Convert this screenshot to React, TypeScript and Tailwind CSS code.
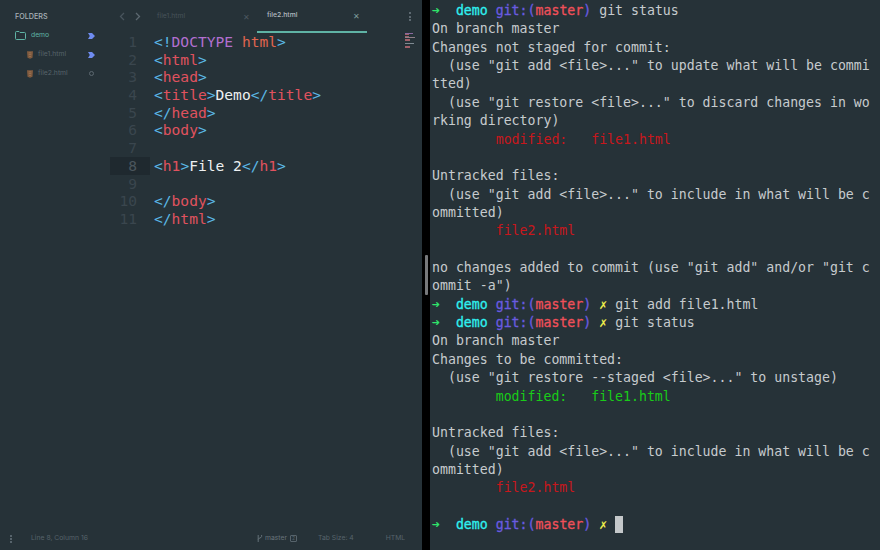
const mono = 'font-["DejaVu_Sans_Mono",monospace]';

function Badge() {
  return (
    <svg width="7" height="8" viewBox="0 0 7 8" className="shrink-0">
      <path d="M0 1H4L7 4L4 7H0L1.8 4Z" fill="#6f8cf0" />
    </svg>
  );
}

function Circle() {
  return <span className="block w-[5px] h-[5px] rounded-full border border-[#5c6870] mx-[1px] shrink-0" />;
}

function HtmlIcon() {
  return (
    <svg width="6" height="8" viewBox="0 0 7 9" className="shrink-0">
      <path d="M0 0H7L6.4 7.8L3.5 9L0.6 7.8Z" fill="#7f5a3e" />
      <path d="M2 2H5M2 4H5M2.4 6L3.5 6.6L4.6 6" stroke="#a87e5e" strokeWidth="0.7" fill="none" />
    </svg>
  );
}

function FileRow({ name, status }: { name: string; status: React.ReactNode }) {
  return (
    <div className="h-[19px] flex items-center pl-[27px] pr-[15px]">
      <HtmlIcon />
      <span className="ml-[5px] text-[6.8px] text-[#56636b] flex-1">{name}</span>
      {status}
    </div>
  );
}

function Sidebar() {
  return (
    <div className="w-[110px] shrink-0 pt-[12px]">
      <div className="pl-[15px] h-[10px] flex items-center text-[7.2px] font-medium text-[#a9b2b8]">FOLDERS</div>
      <div className="h-[19px] mt-[4px] flex items-center pl-[15px] pr-[15px]">
        <svg width="11" height="9" viewBox="0 0 11 9" fill="none" stroke="#5fb3a5" strokeWidth="1" className="shrink-0">
          <path d="M0.5 1.5a1 1 0 0 1 1-1h2.5l1 1h4.5a1 1 0 0 1 1 1v5a1 1 0 0 1-1 1h-8a1 1 0 0 1-1-1z" />
        </svg>
        <span className="ml-[5px] text-[6.8px] text-[#5fb3a5] flex-1">demo</span>
        <Badge />
      </div>
      <FileRow name="file1.html" status={<Badge />} />
      <FileRow name="file2.html" status={<Circle />} />
    </div>
  );
}

function Tabs() {
  return (
    <div className="h-[33px] flex items-start">
      <div className="w-[47px] h-[33px] flex items-center pl-[9px] gap-[10px]">
        <svg width="6" height="9" viewBox="0 0 6 9" fill="none" stroke="#48545c" strokeWidth="1.3"><path d="M5 1L1.5 4.5L5 8" /></svg>
        <svg width="6" height="9" viewBox="0 0 6 9" fill="none" stroke="#5c6870" strokeWidth="1.3"><path d="M1 1L4.5 4.5L1 8" /></svg>
      </div>
      <div className="w-[100px] h-[33px] flex items-center justify-between pr-[7px]">
        <span className="text-[6.8px] text-[#46525a]">file1.html</span>
        <span className="text-[8px] leading-none text-[#4c5860]">✕</span>
      </div>
      <div className="w-[110px] h-[33px] flex items-center justify-between pl-[10px] pr-[7px] border-b-2 border-[#5fb3a5]">
        <span className="text-[6.8px] font-medium text-[#b4bcc1]">file2.html</span>
        <span className="text-[8px] leading-none text-[#7f9c9c]">✕</span>
      </div>
      <div className="flex-1 flex justify-end pr-[11px] pt-[12px]">
        <div className="flex flex-col gap-[1.5px]">
          <span className="block w-[2px] h-[2px] bg-[#5c6870]" />
          <span className="block w-[2px] h-[2px] bg-[#5c6870]" />
          <span className="block w-[2px] h-[2px] bg-[#5c6870]" />
        </div>
      </div>
    </div>
  );
}

const P = ({ c }: { c: string }) => <span className="text-[#5bb8e6]">{c}</span>;
const R = ({ c }: { c: string }) => <span className="text-[#e0525f]">{c}</span>;
const W = ({ c }: { c: string }) => <span className="text-[#eef0f1]">{c}</span>;

function tag(name: string, close = false) {
  return (
    <>
      <P c={close ? '</' : '<'} />
      <R c={name} />
      <P c=">" />
    </>
  );
}

const code: React.ReactNode[] = [
  <>
    <P c="<!" />
    <span className="text-[#b26fd0]">DOCTYPE</span> <span className="text-[#e0654f]">html</span>
    <P c=">" />
  </>,
  tag('html'),
  tag('head'),
  <>
    {tag('title')}
    <W c="Demo" />
    {tag('title', true)}
  </>,
  tag('head', true),
  tag('body'),
  '',
  <>
    {tag('h1')}
    <W c="File 2" />
    {tag('h1', true)}
  </>,
  '',
  tag('body', true),
  tag('html', true),
];

function Editor() {
  return (
    <div className="flex-1 min-w-0 flex flex-col">
      <Tabs />
      <div className={`relative flex-1 text-[14.6px] leading-[17.7px] whitespace-pre ${mono}`}>
        {code.map((line, i) => (
          <div key={i} className="flex h-[17.7px]">
            <div
              className={`w-[40px] pr-[13px] text-right ${i === 7 ? 'bg-[#1f292f] text-[#4b565d]' : 'text-[#3a464e]'}`}
            >
              {i + 1}
            </div>
            <div className="pl-[4px]">{line}</div>
          </div>
        ))}
        {/* Minimap */}
        <div className="absolute right-[7px] top-0 w-[10px] flex flex-col gap-[0.4px]">
          <span className="block h-[1px] w-[8px] bg-[#8a6aa0]" />
          <span className="block h-[1px] w-[4px] bg-[#a0606a]" />
          <span className="block h-[1px] w-[4px] bg-[#a0606a]" />
          <span className="block h-[1px] w-[10px] bg-[#8f7f88]" />
          <span className="block h-[1px] w-[5px] bg-[#a0606a]" />
          <span className="block h-[1px] w-[5px] bg-[#a0606a]" />
          <span className="block h-[1px] w-[1px]" />
          <span className="block h-[1px] w-[9px] bg-[#7f8a92]" />
          <span className="block h-[1px] w-[1px]" />
          <span className="block h-[1px] w-[5px] bg-[#a0606a]" />
          <span className="block h-[1px] w-[5px] bg-[#a0606a]" />
        </div>
      </div>
    </div>
  );
}

function StatusBar() {
  return (
    <div className="h-[24px] shrink-0 pt-[1px] flex items-center text-[6.8px] text-[#56636b]">
      <div className="w-[31px] pl-[10px] flex flex-col gap-[1px]">
        <span className="block w-[2px] h-[2px] bg-[#56636b]" />
        <span className="block w-[2px] h-[2px] bg-[#56636b]" />
        <span className="block w-[2px] h-[2px] bg-[#56636b]" />
      </div>
      <span className="w-[226px]">Line 8, Column 16</span>
      <svg width="6" height="9" viewBox="0 0 6 9" fill="none" stroke="#6a767e" strokeWidth="0.9" className="shrink-0">
        <path d="M1.2 1V8M4.6 1V2.5C4.6 4 1.2 4 1.2 5.5" />
      </svg>
      <span className="ml-[2px] text-[#66727a]">master</span>
      <span className="ml-[3px] w-[7px] h-[7px] border border-[#56636b] rounded-[1px] text-[5px] leading-[5px] text-center">2</span>
      <span className="ml-[21px]">Tab Size: 4</span>
      <span className="ml-[32px]">HTML</span>
    </div>
  );
}

function Prompt({ dirty, cmd }: { dirty?: boolean; cmd?: string }) {
  return (
    <>
      <span className="text-[#2fe36b] font-bold">➜</span>
      {'  '}
      <span className="text-[#2ff0f0] [-webkit-text-stroke:0.3px]">demo</span>{' '}
      <span className="text-[#6a5be0] [-webkit-text-stroke:0.3px]">git:(</span>
      <span className="text-[#f0505a] [-webkit-text-stroke:0.3px]">master</span>
      <span className="text-[#6a5be0] [-webkit-text-stroke:0.3px]">)</span>
      {dirty && (
        <>
          {' '}
          <span className="text-[#eeee4a] font-bold">✗</span>
        </>
      )}
      {cmd && ` ${cmd}`}
    </>
  );
}

const RED = 'text-[#c8171c]';
const GREEN = 'text-[#19cc19]';

const termLines: React.ReactNode[] = [
  <Prompt cmd="git status" />,
  'On branch master',
  'Changes not staged for commit:',
  '  (use "git add <file>..." to update what will be commi',
  'tted)',
  '  (use "git restore <file>..." to discard changes in wo',
  'rking directory)',
  <span className={RED}>{'        modified:   file1.html'}</span>,
  '',
  'Untracked files:',
  '  (use "git add <file>..." to include in what will be c',
  'ommitted)',
  <span className={RED}>{'        file2.html'}</span>,
  '',
  'no changes added to commit (use "git add" and/or "git c',
  'ommit -a")',
  <Prompt dirty cmd="git add file1.html" />,
  <Prompt dirty cmd="git status" />,
  'On branch master',
  'Changes to be committed:',
  '  (use "git restore --staged <file>..." to unstage)',
  <span className={GREEN}>{'        modified:   file1.html'}</span>,
  '',
  'Untracked files:',
  '  (use "git add <file>..." to include in what will be c',
  'ommitted)',
  <span className={RED}>{'        file2.html'}</span>,
  '',
  <>
    <Prompt dirty />{' '}
    <span className="inline-block w-[8px] h-[17px] bg-[#c4c8ca] align-top" />
  </>,
];

function Terminal() {
  return (
    <div className="relative flex-1 min-w-0 bg-[#263238] pl-[2px] pt-[2px] border-l-[8px] border-black">
      {/* Scrollbar thumb */}
      <div className="absolute left-[-5px] top-[255px] w-[3px] h-[40px] rounded-[1px] bg-[#77797b]" />
      <div className={`text-[13.22px] leading-[18.36px] whitespace-pre text-[#c6cbce] ${mono}`}>
        {termLines.map((line, i) => (
          <div key={i} className="h-[18.36px]">
            {line}
          </div>
        ))}
      </div>
    </div>
  );
}

export default function App() {
  return (
    <div className='flex w-[880px] h-[550px] overflow-hidden bg-[#263238] font-["Inter",sans-serif]'>
      <div className="w-[422px] shrink-0 flex flex-col">
        <div className="flex-1 min-h-0 flex">
          <Sidebar />
          <Editor />
        </div>
        <StatusBar />
      </div>
      <Terminal />
    </div>
  );
}
